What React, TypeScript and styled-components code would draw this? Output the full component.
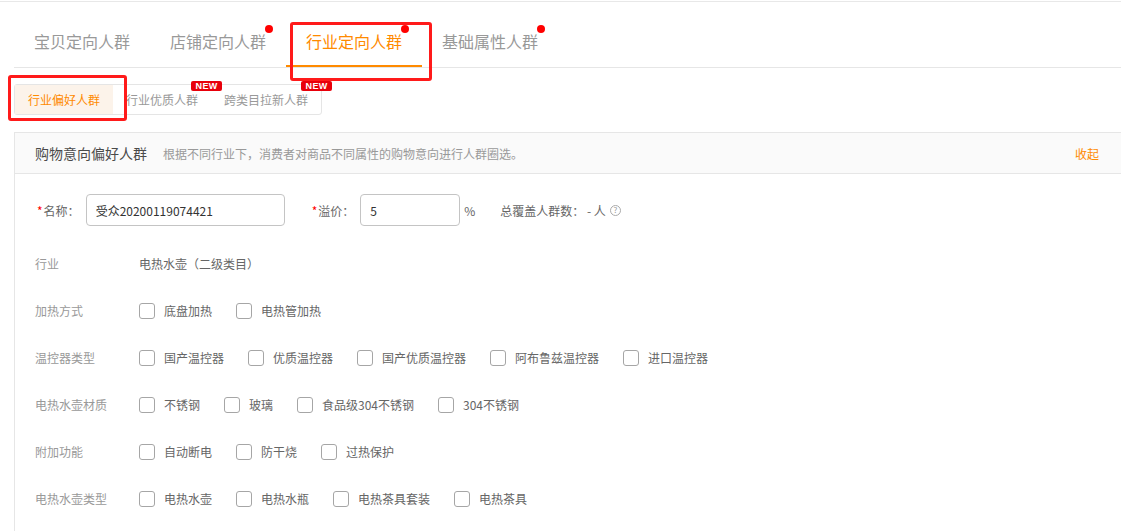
import * as React from 'react';
import styled, { createGlobalStyle } from 'styled-components';

const GlobalStyle = createGlobalStyle`
  html, body {
    margin: 0;
    padding: 0;
    background: #fff;
  }
  body {
    font-family: "Noto Sans CJK SC", "Noto Sans", "Liberation Sans", sans-serif;
    font-size: 12px;
    color: #666;
    overflow: hidden;
  }
  * {
    box-sizing: border-box;
  }
`;

const ORANGE = '#ff8a00';

const Page = styled.div`
  position: relative;
  width: 1121px;
  height: 531px;
  overflow: hidden;
  padding-top: 1px;
`;

const TopRule = styled.div`
  height: 1px;
  background: #e8e8e8;
`;

const TabBar = styled.div`
  display: flex;
  margin-left: 14px;
  padding-top: 15px;
  border-bottom: 1px solid #e6e6e6;
`;

const Tab = styled.div<{ $active?: boolean }>`
  position: relative;
  width: 136px;
  padding: 0 20px;
  line-height: 48px;
  font-size: 16px;
  white-space: nowrap;
  color: ${(p) => (p.$active ? ORANGE : '#999')};
  border-bottom: 2px solid ${(p) => (p.$active ? ORANGE : 'transparent')};
`;

const Dot = styled.span`
  position: absolute;
  top: 8px;
  right: 13px;
  width: 8px;
  height: 8px;
  border-radius: 50%;
  background: #f00;
`;

const SubTabs = styled.div`
  display: inline-flex;
  margin: 16px 0 0 14px;
  border: 1px solid #e5e5e5;
  border-radius: 3px;
`;

const SubTab = styled.div<{ $active?: boolean }>`
  position: relative;
  padding: 0 13px;
  line-height: 29px;
  font-size: 12px;
  white-space: nowrap;
  color: ${(p) => (p.$active ? ORANGE : '#999')};
  background: ${(p) => (p.$active ? '#fcf3ea' : 'transparent')};
`;

const NewBadge = styled.span`
  position: absolute;
  top: -4px;
  right: -11px;
  width: 31px;
  height: 10px;
  border-radius: 2px;
  background: #e8000b;
  color: #fff;
  font-family: "Liberation Sans", Arial, sans-serif;
  font-size: 9px;
  font-weight: 700;
  line-height: 10px;
  text-align: center;
  letter-spacing: 0.3px;
`;

const Panel = styled.div`
  width: 1130px;
  margin: 17px 0 0 14px;
  border: 1px solid #e6e6e6;
`;

const PanelHeader = styled.div`
  display: flex;
  align-items: center;
  height: 41px;
  padding: 0 44px 0 20px;
  background: #fafafa;
  border-bottom: 1px solid #e6e6e6;
`;

const PanelTitle = styled.span`
  font-size: 14px;
  color: #4a4a4a;
`;

const PanelDesc = styled.span`
  margin-left: 16px;
  font-size: 12px;
  color: #999;
`;

const Collapse = styled.span`
  margin-left: auto;
  font-size: 12px;
  color: ${ORANGE};
`;

const PanelBody = styled.div`
  padding: 20px 20px 60px 20px;
`;

const FieldRow = styled.div`
  display: flex;
  align-items: center;
  height: 32px;
  margin-bottom: 14px;
`;

const FieldLabel = styled.label<{ $first?: boolean }>`
  margin-left: ${(p) => (p.$first ? '2px' : '27px')};
  margin-right: 6px;
  color: #666;
  white-space: nowrap;
`;

const Required = styled.span`
  color: #f00;
  margin-right: 1px;
`;

const TextInput = styled.input<{ $width: number }>`
  width: ${(p) => p.$width}px;
  height: 32px;
  padding: 0 9px;
  border: 1px solid #c4c4c4;
  border-radius: 4px;
  font-family: inherit;
  font-size: 12px;
  color: #333;
  outline: none;
`;

const Unit = styled.span`
  margin-left: 4px;
  color: #666;
`;

const Coverage = styled.span`
  display: inline-flex;
  align-items: center;
  margin-left: 25px;
  color: #666;
  white-space: nowrap;
`;

const HelpIcon = styled.span`
  display: inline-flex;
  align-items: center;
  justify-content: center;
  width: 11px;
  height: 11px;
  margin-left: 4px;
  border: 1px solid #aaa;
  border-radius: 50%;
  font-size: 8px;
  line-height: 1;
  color: #999;
`;

const DataRow = styled.div`
  display: flex;
  align-items: center;
  height: 47px;
`;

const RowLabel = styled.div`
  width: 104px;
  flex-shrink: 0;
  color: #999;
  white-space: nowrap;
`;

const RowValue = styled.div`
  display: flex;
  align-items: center;
  gap: 24px;
  color: #666;
`;

const Option = styled.label`
  display: inline-flex;
  align-items: center;
  white-space: nowrap;
  color: #666;
`;

const Box = styled.span`
  width: 16px;
  height: 16px;
  margin-right: 9px;
  border: 1px solid #a6a6a6;
  border-radius: 3px;
  background: #fff;
`;

const Highlight = styled.div<{ $x: number; $y: number; $w: number; $h: number }>`
  position: absolute;
  left: ${(p) => p.$x}px;
  top: ${(p) => p.$y}px;
  width: ${(p) => p.$w}px;
  height: ${(p) => p.$h}px;
  border: 3px solid #ff1a1a;
  border-radius: 3px;
  pointer-events: none;
`;

const mainTabs = [
  { label: '宝贝定向人群', dot: false },
  { label: '店铺定向人群', dot: true },
  { label: '行业定向人群', dot: true, active: true },
  { label: '基础属性人群', dot: true },
];

const subTabs = [
  { label: '行业偏好人群', active: true },
  { label: '行业优质人群', isNew: true },
  { label: '跨类目拉新人群', isNew: true },
];

const attributeRows = [
  { label: '加热方式', options: ['底盘加热', '电热管加热'] },
  { label: '温控器类型', options: ['国产温控器', '优质温控器', '国产优质温控器', '阿布鲁兹温控器', '进口温控器'] },
  { label: '电热水壶材质', options: ['不锈钢', '玻璃', '食品级304不锈钢', '304不锈钢'] },
  { label: '附加功能', options: ['自动断电', '防干烧', '过热保护'] },
  { label: '电热水壶类型', options: ['电热水壶', '电热水瓶', '电热茶具套装', '电热茶具'] },
];

export default function App() {
  return (
    <>
      <GlobalStyle />
      <Page>
        <TopRule />
        <TabBar>
          {mainTabs.map((t) => (
            <Tab key={t.label} $active={t.active}>
              {t.label}
              {t.dot && <Dot />}
            </Tab>
          ))}
        </TabBar>

        <SubTabs>
          {subTabs.map((t) => (
            <SubTab key={t.label} $active={t.active}>
              {t.label}
              {t.isNew && <NewBadge>NEW</NewBadge>}
            </SubTab>
          ))}
        </SubTabs>

        <Panel>
          <PanelHeader>
            <PanelTitle>购物意向偏好人群</PanelTitle>
            <PanelDesc>根据不同行业下，消费者对商品不同属性的购物意向进行人群圈选。</PanelDesc>
            <Collapse>收起</Collapse>
          </PanelHeader>
          <PanelBody>
            <FieldRow>
              <FieldLabel $first>
                <Required>*</Required>名称：
              </FieldLabel>
              <TextInput $width={199} defaultValue="受众20200119074421" />
              <FieldLabel>
                <Required>*</Required>溢价：
              </FieldLabel>
              <TextInput $width={100} defaultValue="5" />
              <Unit>%</Unit>
              <Coverage>
                总覆盖人群数：&nbsp;-&nbsp;人
                <HelpIcon>?</HelpIcon>
              </Coverage>
            </FieldRow>

            <DataRow>
              <RowLabel>行业</RowLabel>
              <RowValue>电热水壶（二级类目）</RowValue>
            </DataRow>

            {attributeRows.map((row) => (
              <DataRow key={row.label}>
                <RowLabel>{row.label}</RowLabel>
                <RowValue>
                  {row.options.map((o) => (
                    <Option key={o}>
                      <Box />
                      {o}
                    </Option>
                  ))}
                </RowValue>
              </DataRow>
            ))}
          </PanelBody>
        </Panel>

        <Highlight $x={290} $y={22} $w={142} $h={59} />
        <Highlight $x={8} $y={75} $w={119} $h={46} />
      </Page>
    </>
  );
}
